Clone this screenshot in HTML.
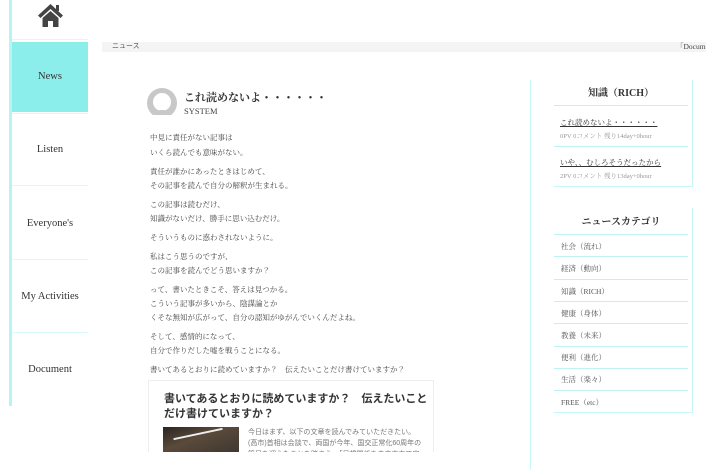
<!DOCTYPE html>
<html><head><meta charset="utf-8"><style>
*{margin:0;padding:0;box-sizing:border-box}
body{width:706px;height:470px;overflow:hidden;background:#fff;position:relative;font-family:"Liberation Serif","Noto Serif CJK JP",serif;color:#333}
.a{position:absolute;white-space:nowrap}
.nav{position:absolute;left:12px;width:76px;text-align:center;font-size:10.5px;color:#333;border-bottom:1px solid #d8fafa}
.p{position:absolute;left:150px;font-size:7.5px;color:#444;white-space:nowrap}
.hl{position:absolute;left:554px;width:134px;height:1px;background:#bff3f3}
.cat{position:absolute;left:561px;font-size:7.5px;color:#555}
</style></head><body>
<div class="a" style="left:9px;top:0;width:3px;height:406px;background:#b5f5f5"></div>
<svg class="a" style="left:37px;top:3px" width="27" height="24" viewBox="0 0 27 24"><path d="M13.5 1 L1 12.5 L3.5 15 L13.5 6 L23.5 15 L26 12.5 Z" fill="#444"/><rect x="19" y="2" width="3" height="6" fill="#444"/><path d="M5.5 15 L13.5 8 L21.5 15 V24 H16 V18 H11 V24 H5.5 Z" fill="#444"/></svg>
<div class="a" style="left:12px;top:39px;width:76px;height:1px;background:#d8fafa"></div>
<div class="nav" style="top:42px;height:70px;line-height:70px;background:#8ceeea;border:none">News</div>
<div class="a" style="left:12px;top:113px;width:76px;height:1px;background:#d8fafa"></div>
<div class="nav" style="top:114px;height:72px;line-height:72px">Listen</div>
<div class="nav" style="top:187px;height:73px;line-height:73px">Everyone's</div>
<div class="nav" style="top:260px;height:73px;line-height:73px">My Activities</div>
<div class="nav" style="top:333px;height:73px;line-height:73px;border:none">Document</div>

<div class="a" style="left:102px;top:42px;width:604px;height:10px;background:#f4f4f4"></div>
<div class="a" style="left:112px;top:42px;font-size:7px;line-height:10px;color:#555;font-family:'Liberation Sans','Noto Sans CJK JP',sans-serif">ニュース</div>
<div class="a" style="left:676px;top:42px;font-size:7.5px;line-height:10px;color:#444">「Document</div>

<div class="a" style="left:147px;top:88px;width:30px;height:27px;overflow:hidden"><div style="width:30px;height:30px;border-radius:50%;background:#c8c8c8;position:relative;overflow:hidden"><div style="position:absolute;left:6px;top:5px;width:18px;height:18px;border-radius:50%;background:#fff"></div><div style="position:absolute;left:3px;top:22px;width:24px;height:16px;border-radius:50%;background:#c8c8c8"></div></div></div>
<div class="a" style="left:184px;top:89px;font-size:11px;font-weight:bold;color:#333">これ読めないよ・・・・・・</div>
<div class="a" style="left:184px;top:106px;font-size:8.5px;color:#444">SYSTEM</div>

<div class="p" style="top:132px">中見に責任がない記事は</div>
<div class="p" style="top:147px">いくら読んでも意味がない。</div>
<div class="p" style="top:166px">責任が誰かにあったときはじめて、</div>
<div class="p" style="top:180px">その記事を読んで自分の解釈が生まれる。</div>
<div class="p" style="top:199px">この記事は読むだけ、</div>
<div class="p" style="top:213px">知識がないだけ、勝手に思い込むだけ。</div>
<div class="p" style="top:232px">そういうものに惑わされないように。</div>
<div class="p" style="top:251px">私はこう思うのですが、</div>
<div class="p" style="top:265px">この記事を読んでどう思いますか？</div>
<div class="p" style="top:284px">って、書いたときこそ、答えは見つかる。</div>
<div class="p" style="top:298px">こういう記事が多いから、陰謀論とか</div>
<div class="p" style="top:312px">くそな無知が広がって、自分の認知がゆがんでいくんだよね。</div>
<div class="p" style="top:331px">そして、感情的になって、</div>
<div class="p" style="top:345px">自分で作りだした嘘を戦うことになる。</div>
<div class="p" style="top:364px">書いてあるとおりに読めていますか？　伝えたいことだけ書けていますか？</div>

<div class="a" style="left:148px;top:380px;width:286px;height:80px;border:1px solid #eee;font-family:'Liberation Sans','Noto Sans CJK JP',sans-serif">
<div class="a" style="left:15px;top:11px;font-size:11px;font-weight:bold;line-height:15px;color:#333">書いてあるとおりに読めていますか？　伝えたいこと<br>だけ書けていますか？</div>
<div class="a" style="left:14px;top:46px;width:76px;height:30px;background:linear-gradient(160deg,#2a2522 0%,#5a4a3a 40%,#3a3430 100%)"><div style="position:absolute;left:10px;top:6px;width:50px;height:2px;background:#eee;transform:rotate(-12deg)"></div></div>
<div class="a" style="left:99px;top:46px;font-size:7px;line-height:11px;color:#777;white-space:normal;width:176px">今日はまず、以下の文章を読んでみていただきたい。(高市)首相は会談で、両国が今年、国交正常化60周年の節目を迎えたことを踏まえ、「日韓関係を未来志向で安定的に</div>
</div>
<div class="a" style="left:0;top:452px;width:520px;height:18px;background:#fff"></div>

<div class="a" style="left:530px;top:80px;width:1px;height:390px;background:#c8f6f6"></div>
<div class="a" style="left:692px;top:80px;width:1px;height:107px;background:#c8f6f6"></div>
<div class="a" style="left:554px;top:186px;width:139px;height:1px;background:#c8f6f6"></div>
<div class="a" style="left:554px;top:84px;width:134px;text-align:center;font-size:10px;font-weight:bold;color:#333">知識（RICH）</div>
<div class="hl" style="top:105px"></div>
<div class="a" style="left:560px;top:117px;font-size:7.5px;color:#333;text-decoration:underline">これ読めないよ・・・・・・</div>
<div class="a" style="left:560px;top:131px;font-size:6.5px;color:#999">0PV  0コメント  残り14day+0hour</div>
<div class="hl" style="top:146px"></div>
<div class="a" style="left:560px;top:157px;font-size:7.5px;color:#333;text-decoration:underline">いや、、むしろそうだったから</div>
<div class="a" style="left:560px;top:171px;font-size:6.5px;color:#999">2PV  0コメント  残り13day+0hour</div>

<div class="a" style="left:692px;top:208px;width:1px;height:205px;background:#c8f6f6"></div>
<div class="a" style="left:554px;top:213px;width:134px;text-align:center;font-size:10px;font-weight:bold;color:#333">ニュースカテゴリ</div>
<div class="hl" style="top:234px"></div>
<div class="cat" style="top:241px">社会（流れ）</div>
<div class="hl" style="top:256px"></div>
<div class="cat" style="top:263px">経済（動向）</div>
<div class="hl" style="top:279px"></div>
<div class="cat" style="top:286px">知識（RICH）</div>
<div class="hl" style="top:301px"></div>
<div class="cat" style="top:308px">健康（身体）</div>
<div class="hl" style="top:323px"></div>
<div class="cat" style="top:330px">教養（未来）</div>
<div class="hl" style="top:346px"></div>
<div class="cat" style="top:352px">便利（進化）</div>
<div class="hl" style="top:368px"></div>
<div class="cat" style="top:374px">生活（楽々）</div>
<div class="hl" style="top:390px"></div>
<div class="cat" style="top:397px">FREE（etc）</div>
<div class="a" style="left:554px;top:412px;width:139px;height:1px;background:#c8f6f6"></div>
</body></html>
